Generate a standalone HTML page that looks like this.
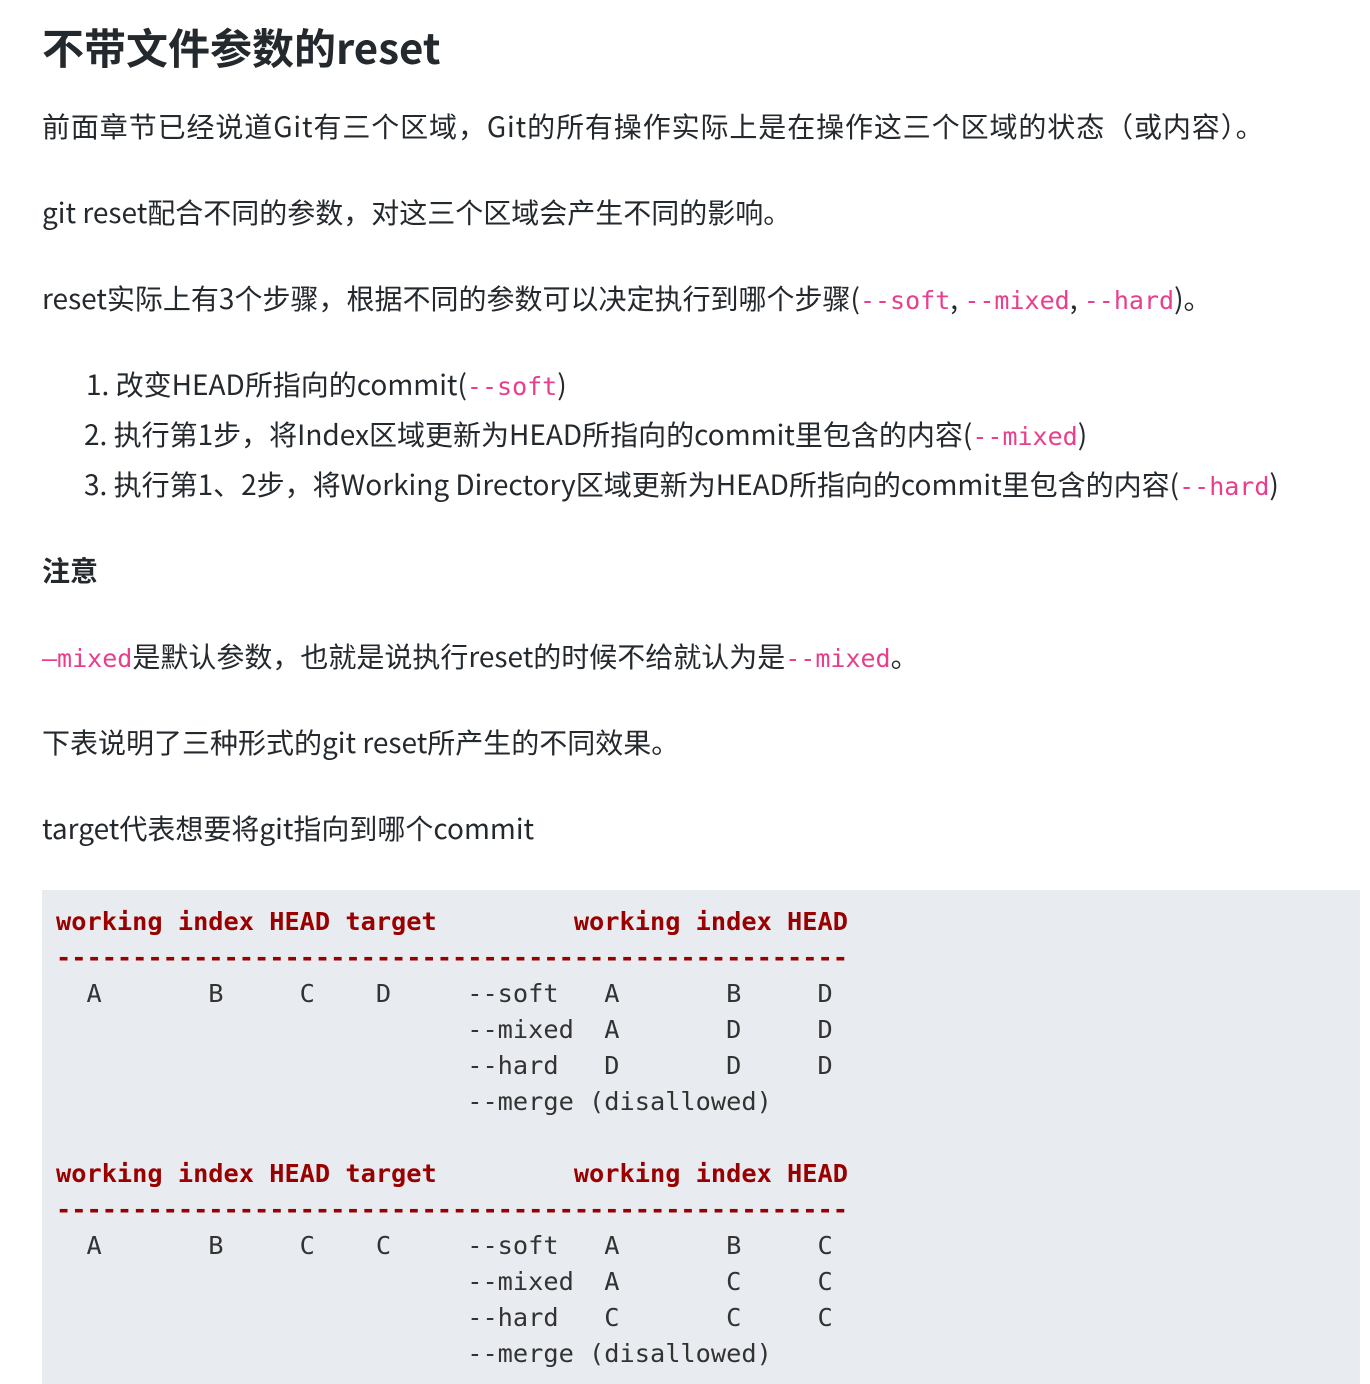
<!DOCTYPE html>
<html><head><meta charset="utf-8"><style>
body{margin:0;background:#fff;width:1370px;height:1384px;overflow:hidden;position:relative;font-family:"Noto Sans CJK SC","Liberation Sans",sans-serif;color:#24292e;}
.l{position:absolute;left:42px;font-size:28px;white-space:nowrap;line-height:40px;}
h1{position:absolute;left:42px;top:16px;margin:0;font-size:42px;line-height:62px;font-weight:bold;}
code{font-family:"DejaVu Sans Mono",monospace;color:#e83e8c;font-size:25px;letter-spacing:0;}
pre{position:absolute;left:42px;top:890px;width:1318px;height:494px;margin:0;background:#e8ebef;padding:14px;box-sizing:border-box;font-family:"DejaVu Sans Mono",monospace;font-size:25.3px;line-height:36px;color:#333;}
b{color:#990000;}
</style></head><body>
<h1>不带文件参数的reset</h1>
<div class="l" style="top:106px;letter-spacing:0.9px">前面章节已经说道Git有三个区域，Git的所有操作实际上是在操作这三个区域的状态（或内容）。</div>
<div class="l" style="top:192px">git reset配合不同的参数，对这三个区域会产生不同的影响。</div>
<div class="l" style="top:278px">reset实际上有3个步骤，根据不同的参数可以决定执行到哪个步骤(<code>--soft</code>, <code>--mixed</code>, <code>--hard</code>)。</div>
<div class="l" style="top:364px;left:86px">1. 改变HEAD所指向的commit(<code>--soft</code>)</div>
<div class="l" style="top:414px;left:84px">2. 执行第1步，将Index区域更新为HEAD所指向的commit里包含的内容(<code>--mixed</code>)</div>
<div class="l" style="top:464px;left:84px">3. 执行第1、2步，将Working Directory区域更新为HEAD所指向的commit里包含的内容(<code>--hard</code>)</div>
<div class="l" style="top:550px;font-weight:bold">注意</div>
<div class="l" style="top:636px"><code>—mixed</code>是默认参数，也就是说执行reset的时候不给就认为是<code>--mixed</code>。</div>
<div class="l" style="top:722px">下表说明了三种形式的git reset所产生的不同效果。</div>
<div class="l" style="top:808px">target代表想要将git指向到哪个commit</div>
<pre><b>working index HEAD target         working index HEAD
----------------------------------------------------</b>
  A       B     C    D     --soft   A       B     D
                           --mixed  A       D     D
                           --hard   D       D     D
                           --merge (disallowed)

<b>working index HEAD target         working index HEAD
----------------------------------------------------</b>
  A       B     C    C     --soft   A       B     C
                           --mixed  A       C     C
                           --hard   C       C     C
                           --merge (disallowed)</pre>
</body></html>
